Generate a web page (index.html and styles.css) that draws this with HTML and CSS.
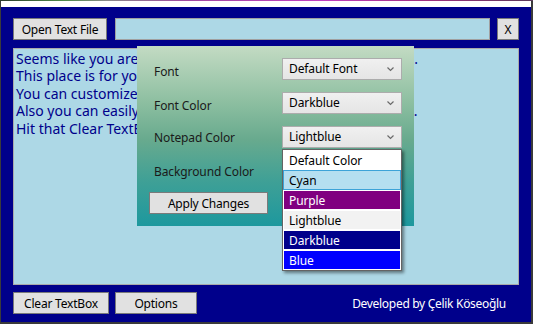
FILE: index.html
```html
<!DOCTYPE html>
<html lang="en">
<head>
	<meta charset="UTF-8">
	<title>Notepad</title>
	<link rel="stylesheet" href="styles.css">
</head>
<body>
	<div class="desktop-strip"></div>
	<div class="window">
		<div class="titlebar"></div>
		<div class="client">
			<div class="toolbar">
				<button class="btn btn-open">Open Text File</button>
				<div class="path-box"></div>
				<button class="btn btn-x">X</button>
			</div>

			<div class="notepad">
				<div>Seems like you are new here, so let me tell you some things...</div>
				<div>This place is for your notes, you can write anything here</div>
				<div>You can customize fonts and colors from the Options.</div>
				<div>Also you can easily open any text files from your desktop too.</div>
				<div>Hit that Clear TextBox button and start writing.</div>
			</div>

			<div class="footer">
				<button class="btn btn-clear">Clear TextBox</button>
				<button class="btn btn-options">Options</button>
				<span class="credit">Developed by Çelik Köseoğlu</span>
			</div>

			<!-- options panel, shown over the notepad -->
			<div class="options-panel">
				<div class="option-row">
					<span class="option-label">Font</span>
					<div class="combo">Default Font<svg class="chevron" width="7" height="5" viewBox="0 0 7 5"><polyline points="0.5,0.5 3.5,3.5 6.5,0.5" fill="none" stroke="#6a6a6a" stroke-width="1.2"/></svg></div>
				</div>
				<div class="option-row">
					<span class="option-label">Font Color</span>
					<div class="combo">Darkblue<svg class="chevron" width="7" height="5" viewBox="0 0 7 5"><polyline points="0.5,0.5 3.5,3.5 6.5,0.5" fill="none" stroke="#6a6a6a" stroke-width="1.2"/></svg></div>
				</div>
				<div class="option-row">
					<span class="option-label label-up">Notepad Color</span>
					<div class="combo combo-open">Lightblue<svg class="chevron" width="7" height="5" viewBox="0 0 7 5"><polyline points="0.5,0.5 3.5,3.5 6.5,0.5" fill="none" stroke="#6a6a6a" stroke-width="1.2"/></svg>
						<ul class="dropdown">
							<li class="item">Default Color</li>
							<li class="item item-hover">Cyan</li>
							<li class="item item-purple">Purple</li>
							<li class="item item-lightblue">Lightblue</li>
							<li class="item item-darkblue">Darkblue</li>
							<li class="item item-blue">Blue</li>
						</ul>
					</div>
				</div>
				<div class="option-row">
					<span class="option-label label-up">Background Color</span>
					<div class="combo">Darkblue</div>
				</div>
				<button class="btn btn-apply">Apply Changes</button>
			</div>
		</div>
	</div>
</body>
</html>
```

FILE: styles.css
```css
body {
	margin: 0;
	background: #3a3a3a;
	font-family: "Noto Sans", "Open Sans", sans-serif;
	overflow: hidden;
}
.desktop-strip {
	height: 1px;
	background: linear-gradient(90deg, #2c3b2c 0%, #4f8a4a 12%, #8a8a8a 20%, #a04aa0 35%, #c040c0 60%, #a03080 80%, #5a3a5a 100%);
}
.window {
	margin-left: 1px;
	width: 530px;
}
.titlebar {
	height: 6px;
	background: #fff;
}
.client {
	position: relative;
	box-sizing: border-box;
	height: 315px;
	padding: 11px 12px 8px;
	background: #00008b;
	display: flex;
	flex-direction: column;
	gap: 8px;
}
.btn {
	height: 22px;
	padding: 0;
	font-family: inherit;
	font-size: 12px;
	letter-spacing: -0.2px;
	color: #000;
	background: #e1e1e1;
	border: 1px solid #7a7a7a;
}
.toolbar {
	display: flex;
	gap: 8px;
}
.btn-open {
	width: 94px;
}
.path-box {
	width: 375px;
	height: 22px;
	box-sizing: border-box;
	background: #add8e6;
	border: 1px solid #a0a0a0;
}
.btn-x {
	width: 22px;
	margin-left: -1px;
}
.notepad {
	flex: 1;
	padding: 1px 2px;
	background: #add8e6;
	border: 1px solid #a9a9a9;
	color: #00008b;
	font-size: 14px;
	line-height: 17.4px;
	white-space: nowrap;
	overflow: hidden;
}
.footer {
	display: flex;
	align-items: center;
	gap: 6px;
	margin-top: -1px;
}
.btn-clear {
	width: 96px;
}
.btn-options {
	width: 82px;
}
.credit {
	margin-left: auto;
	margin-right: 13px;
	color: #fff;
	font-size: 12px;
	letter-spacing: -0.3px;
}
.options-panel {
	position: absolute;
	left: 136px;
	top: 39px;
	width: 277px;
	height: 180px;
	box-sizing: border-box;
	padding: 12px 12px 0 17px;
	background: linear-gradient(180deg, #c3dbc3 0%, #8fc0a2 30%, #68aa8e 52%, #3fa096 75%, #1d989e 100%);
	display: flex;
	flex-direction: column;
	gap: 12px;
}
.option-row {
	display: flex;
	justify-content: space-between;
	height: 22px;
}
.option-label {
	padding-top: 5px;
	font-size: 12px;
	letter-spacing: -0.1px;
	color: #1a1a1a;
}
.label-up {
	padding-top: 3px;
}
.combo {
	position: relative;
	width: 120px;
	height: 22px;
	box-sizing: border-box;
	padding-left: 6px;
	border: 1px solid #acacac;
	background: linear-gradient(180deg, #f0f0f0, #e5e5e5);
	font-size: 12px;
	line-height: 20px;
	letter-spacing: -0.1px;
	color: #000;
}
.chevron {
	position: absolute;
	right: 7px;
	top: 8px;
}
.dropdown {
	position: absolute;
	left: -1px;
	top: 22px;
	z-index: 2;
	width: 120px;
	box-sizing: border-box;
	margin: 0;
	padding: 0;
	list-style: none;
	background: #fff;
	border: 1px solid #646464;
	box-shadow: 2px 2px 3px rgba(0, 0, 0, 0.45);
}
.item {
	height: 20px;
	box-sizing: border-box;
	padding-left: 5px;
	border: 1px solid #fff;
	line-height: 19px;
	font-size: 12px;
	color: #000;
}
.item-hover {
	background: #b5dff0;
	border-color: #3da3d8;
}
.item-purple {
	background: #800080;
	color: #fff;
}
.item-lightblue {
	background: #f2f2f2;
}
.item-darkblue {
	background: #00008b;
	color: #fff;
}
.item-blue {
	background: #0000ff;
	color: #fff;
}
.btn-apply {
	width: 119px;
	margin-top: -2px;
	margin-left: -5px;
}
```
